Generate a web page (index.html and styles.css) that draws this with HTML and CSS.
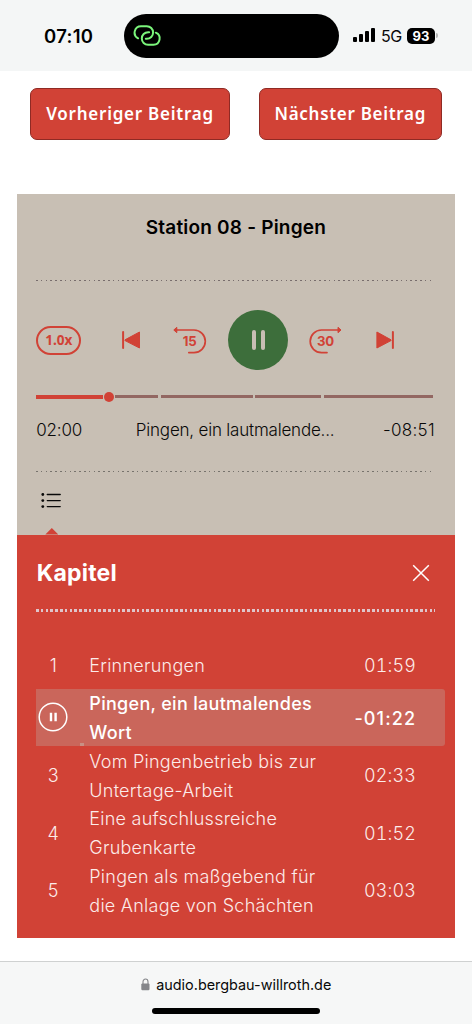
FILE: index.html
```html
<!DOCTYPE html>
<html lang="de">
<head>
<meta charset="utf-8">
<title>Station 08 - Pingen</title>
<link rel="stylesheet" href="styles.css">
</head>
<body>
<div class="screen">
  <header class="status">
    <span class="clock">07:10</span>
    <div class="island">
      <svg width="30" height="24" viewBox="0 0 30 24" fill="none" stroke="#7bf57b" stroke-width="2" stroke-linecap="round"><path d="M5.1 15.3A6.4 6.4 0 0 1 8 3.2H13.8A6.3 6.3 0 0 1 13.8 15.8H12.8"/><path d="M16.1 9.2H15.1A6.3 6.3 0 0 0 15.1 21.8H20.5A6.3 6.3 0 0 0 22.8 9.7"/></svg>
    </div>
    <div class="signals">
      <svg width="22" height="16" viewBox="0 0 22 16"><rect x="0" y="9" width="4" height="5" rx="1"/><rect x="6" y="6" width="4" height="8" rx="1"/><rect x="12" y="3" width="4" height="11" rx="1"/><rect x="18" y="0" width="4" height="14" rx="1"/></svg>
      <span class="network">5G</span>
      <span class="battery">93</span><i class="battery-tip"></i>
    </div>
  </header>

  <main class="page">
    <nav class="posts">
      <a class="post prev"><span>Vorheriger Beitrag</span></a>
      <a class="post next"><span>Nächster Beitrag</span></a>
    </nav>

    <section class="player">
      <h1 class="title">Station 08 - Pingen</h1>
      <div class="dots"></div>
      <div class="controls">
        <button class="speed">1.0x</button>
        <svg class="skip-back" width="20" height="20" viewBox="0 0 20 20"><path d="M1.1 2V18" stroke="#d14236" stroke-width="2" stroke-linecap="round"/><path d="M17.5 2L3 9.8Q2.4 10.2 3 10.6L17.5 18Z" fill="#d14236" stroke="#d14236" stroke-linejoin="round"/></svg>
        <svg class="back" width="34" height="30" viewBox="0 0 34 30"><path d="M4 5H21A11.3 11.3 0 0 1 21 27.6H15.8" fill="none" stroke="#d14236" stroke-width="1.7" stroke-linecap="round"/><path d="M.8 5L3.8 2.3V7.7Z" fill="#d14236" stroke="#d14236" stroke-linejoin="round"/><text class="seek" x="16.7" y="21.3" text-anchor="middle">15</text></svg>
        <button class="pause"><i></i><i></i></button>
        <svg class="forward" width="34" height="30" viewBox="0 0 34 30"><path d="M29 5H12.5A11.3 11.3 0 0 0 12.5 27.6H18" fill="none" stroke="#d14236" stroke-width="1.7" stroke-linecap="round"/><path d="M32 5L29 2.3V7.7Z" fill="#d14236" stroke="#d14236" stroke-linejoin="round"/><text class="seek" x="16.4" y="21.3" text-anchor="middle">30</text></svg>
        <svg class="skip-next" width="20" height="20" viewBox="0 0 20 20"><path d="M16.9 2V18" stroke="#d14236" stroke-width="2" stroke-linecap="round"/><path d="M.9 2L15 9.8Q15.6 10.2 15 10.6L.9 18Z" fill="#d14236" stroke="#d14236" stroke-linejoin="round"/></svg>
      </div>
      <div class="progress"><i class="played"></i><i class="knob"></i><i class="seg s1"></i><i class="seg s2"></i><i class="seg s3"></i><i class="seg s4"></i></div>
      <div class="times"><span class="elapsed">02:00</span><span class="current">Pingen, ein lautmalende...</span><span class="remain">-08:51</span></div>
      <div class="dots grey"></div>
      <div class="tabs">
        <svg width="20" height="17" viewBox="0 0 20 17"><g fill="#090909"><circle cx="1.8" cy="2.5" r="1.4"/><circle cx="1.8" cy="8.6" r="1.4"/><circle cx="1.8" cy="14.6" r="1.4"/></g><path d="M6.3 2.5H19.2M6.3 8.6H19.2M6.3 14.6H19.2" stroke="#090909" stroke-width="1.4" stroke-linecap="round"/></svg>
        <i class="arrow"></i>
      </div>
    </section>

    <section class="chapters">
      <div class="head">
        <h2 class="heading">Kapitel</h2>
        <svg width="18" height="18" viewBox="0 0 18 18"><path d="M1.2 1.2L16.8 16.8M16.8 1.2L1.2 16.8" stroke="#fff" stroke-width="1.5"/></svg>
      </div>
      <div class="dots light"></div>
      <div class="list">
        <div class="row first"><span class="num">1</span><span class="name">Erinnerungen</span><span class="dur">01:59</span></div>
        <div class="row active"><span class="num"><svg width="30" height="30" viewBox="0 0 30 30"><circle cx="15" cy="15" r="13.8" fill="none" stroke="#fff" stroke-width="1.5"/><path d="M13 10.7V19.3M17.6 10.7V19.3" stroke="#fff" stroke-width="2.4"/></svg></span><span class="name">Pingen, ein lautmalendes<br>Wort</span><span class="dur">-01:22</span><i class="mark"></i></div>
        <div class="row"><span class="num">3</span><span class="name">Vom Pingenbetrieb bis zur<br>Untertage-Arbeit</span><span class="dur">02:33</span></div>
        <div class="row"><span class="num">4</span><span class="name">Eine aufschlussreiche<br>Grubenkarte</span><span class="dur">01:52</span></div>
        <div class="row"><span class="num">5</span><span class="name">Pingen als maßgebend für<br>die Anlage von Schächten</span><span class="dur">03:03</span></div>
      </div>
    </section>
  </main>

  <footer class="browser">
    <div class="address"><svg width="9" height="13" viewBox="0 0 9 13"><path d="M2 6V3.8a2.5 2.8 0 0 1 5 0V6" fill="none" stroke="#85868a" stroke-width="1.1"/><rect x=".3" y="5.4" width="8.2" height="6.8" rx="1.2" fill="#85868a"/></svg><span>audio.bergbau-willroth.de</span></div>
    <div class="home"></div>
  </footer>
</div>
</body>
</html>
```

FILE: styles.css
```css
* { box-sizing: border-box; }
body { margin: 0; background: #fff; font-family: Inter, "Liberation Sans", sans-serif; color: #090909; }
svg { display: block; flex: none; }
button { border: 0; padding: 0; background: none; font: inherit; }
.screen { width: 472px; height: 1024px; display: flex; flex-direction: column; overflow: hidden; }

.status { height: 71px; flex: none; display: flex; align-items: center; background: #f4f6f6; padding-left: 44px; }
.clock { width: 80px; font-size: 18.5px; font-weight: 600; white-space: nowrap; letter-spacing: .3px; color: #000; }
.island { width: 215px; height: 44px; border-radius: 22px; background: #000; padding: 9.5px 0 0 8.5px; }
.signals { display: flex; align-items: center; margin-left: 14px; }
.network { width: 26px; margin-left: 6px; font-size: 16px; letter-spacing: -.6px; }
.battery { width: 28px; height: 16px; border-radius: 5px; background: #000; color: #fff; font-size: 13px; line-height: 16px; font-weight: 700; text-align: center; }
.battery-tip { width: 2px; height: 5px; margin-left: 1px; border-radius: 0 2px 2px 0; background: #b5b7b7; }

.page { flex: 1; display: flex; flex-direction: column; padding: 17px 17.5px 0 17.3px; }
.posts { display: flex; gap: 29px; padding-left: 13px; height: 106px; }
.post { height: 52px; padding-bottom: 1px; border: 1px solid #8f2a24; border-radius: 7px; background: #d14236; color: #fff; display: flex; align-items: center; justify-content: center; font: 600 17px "Noto Sans", sans-serif; white-space: nowrap; }
.prev { width: 199.5px; letter-spacing: .75px; }
.next { width: 183px; letter-spacing: .7px; }

.player { height: 340.6px; flex: none; background: #c8bfb4; padding: 0 19px; display: flex; flex-direction: column; }
.title { margin: 0; height: 86px; padding-top: 22px; line-height: 24px; font-size: 19px; font-weight: 600; letter-spacing: .2px; text-align: center; color: #000; }
.dots { width: 397px; height: 1px; flex: none; background: repeating-linear-gradient(90deg, #786d6d 0 1.6px, transparent 1.6px 4.8px); }
.controls { height: 118px; display: flex; align-items: center; }
.speed { width: 45px; height: 29px; border: 2px solid #d14236; border-radius: 15px; color: #d14236; font: 700 13.6px "Noto Sans", sans-serif; line-height: 24px; }
.skip-back { margin-left: 41px; }
.back { margin-left: 31px; }
.seek { font: 700 13.2px Inter, sans-serif; letter-spacing: -.2px; fill: #d14236; }
.pause { width: 60px; height: 60px; margin-left: 21px; border-radius: 50%; background: #3d6e3b; display: flex; justify-content: center; align-items: center; gap: 5px; }
.pause i { width: 4.2px; height: 20px; border-radius: 2px; background: #c8bfb4; }
.forward { margin-left: 21px; }
.skip-next { margin-left: 33px; }
.progress { height: 12px; margin-top: -8.5px; display: flex; align-items: center; }
.played { width: 67px; height: 4px; background: #d14236; }
.knob { width: 10px; height: 10px; margin: 0 1px; border-radius: 50%; background: #d14236; }
.seg { height: 3px; margin-right: 2.5px; background: #936762; }
.s1 { width: 43px; }
.s2 { width: 92px; }
.s3 { width: 66px; }
.s4 { width: 109px; margin: 0; }
.times { height: 68.5px; display: flex; padding-top: 15px; font-size: 17px; font-weight: 350; line-height: 24px; white-space: nowrap; }
.elapsed { width: 99.5px; letter-spacing: -.2px; }
.current { width: 210px; letter-spacing: -.2px; }
.remain { flex: 1; text-align: right; letter-spacing: .3px; margin-right: .5px; }
.grey { background: repeating-linear-gradient(90deg, #77736d 0 1.6px, transparent 1.6px 4.8px); }
.tabs { flex: 1; padding: 20px 0 0 5px; display: flex; flex-direction: column; justify-content: space-between; }
.arrow { width: 13px; height: 6.5px; margin-left: 4px; background: #d14236; clip-path: polygon(50% 0, 100% 100%, 0 100%); }

.chapters { height: 403.6px; flex: none; background: #d14236; color: #fff; padding: 0 10px 0 19px; }
.head { height: 74.7px; padding: 2px 15px 0 .5px; display: flex; align-items: center; justify-content: space-between; }
.heading { margin: 0; font-size: 23px; font-weight: 700; letter-spacing: .2px; }
.light { width: 399px; height: 3px; background: repeating-linear-gradient(90deg, #dfc5cb 0 2.6px, transparent 2.6px 4.8px); }
.list { padding-top: 38px; font-size: 18px; font-weight: 300; line-height: 28.8px; letter-spacing: .25px; color: #fcecea; }
.row { height: 57.6px; padding-top: 3px; display: flex; align-items: center; position: relative; }
.first { height: 38.4px; padding-top: 2px; align-items: flex-start; }
.num { width: 34px; display: flex; justify-content: center; }
.name { margin-left: 19px; width: 244px; white-space: nowrap; }
.dur { width: 82.8px; text-align: right; font-variant-numeric: tabular-nums; letter-spacing: .15px; }
.active { background: #ca665b; border-radius: 0 3px 3px 0; font-weight: 500; letter-spacing: .3px; color: #fff; }
.active .num { margin-top: -3px; }
.active .dur { font-variant-numeric: normal; letter-spacing: 1.1px; }
.mark { position: absolute; left: 44px; bottom: 0; width: 4px; height: 3px; background: #c89084; }

.browser { height: 63px; flex: none; border-top: 1px solid #cfd1d1; background: #f6f7f7; display: flex; flex-direction: column; align-items: center; }
.address { height: 46px; padding-bottom: 1px; display: flex; align-items: center; gap: 6.5px; font-size: 14.4px; }
.home { width: 168px; height: 6px; border-radius: 3px; background: #000; }
```
